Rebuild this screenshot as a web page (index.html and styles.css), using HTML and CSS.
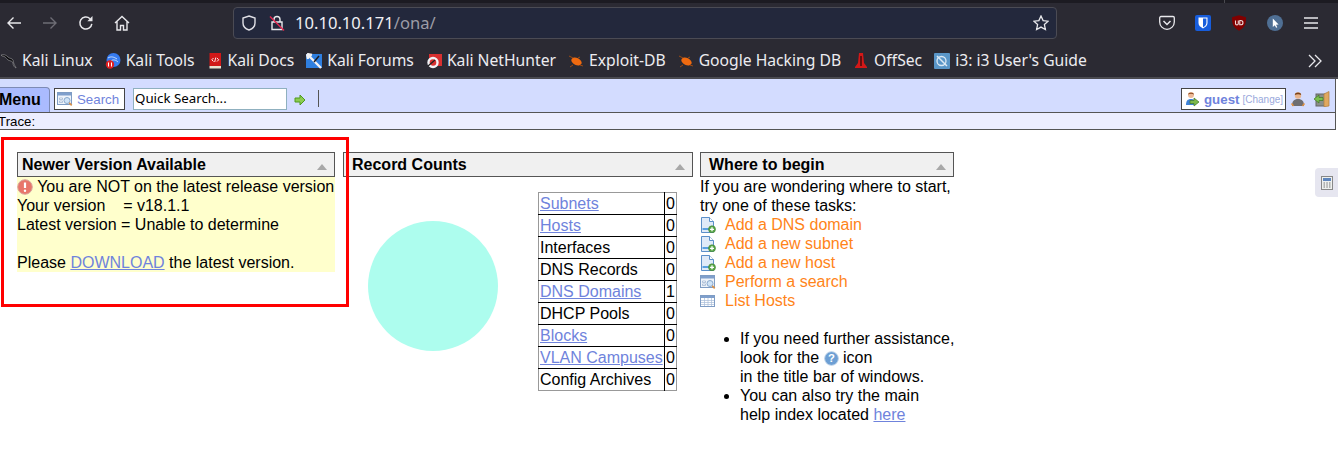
FILE: index.html
```html
<!DOCTYPE html>
<html lang="en">
<head>
<meta charset="utf-8">
<title>OpenNetAdmin</title>
<link rel="stylesheet" href="styles.css">
</head>
<body>
<svg class="defs" width="0" height="0" aria-hidden="true">
  <symbol id="doc-add" viewBox="0 0 16 16">
    <path d="M1.500 .5h8l4 4v11h-12z" fill="#dfeaf8" stroke="#5b8fc9"/>
    <path d="M9.500 .5v4h4" fill="#fff" stroke="#5b8fc9"/>
    <path d="M2.500 11h8v2h-8z" fill="#5aa0e0"/>
    <circle cx="12" cy="12.300" r="3.500" fill="#5aa84a" stroke="#3d8030" stroke-width=".6"/>
    <path d="M10 12.300h4M12 10.300v4" stroke="#fff" stroke-width="1.300"/>
  </symbol>
  <symbol id="search-win" viewBox="0 0 16 16">
    <rect x=".5" y="1.500" width="14" height="12" fill="#eef3fa" stroke="#7e9cc4"/>
    <rect x="1" y="2" width="13" height="2.500" fill="#7f9fcc"/>
    <path d="M2.500 7h3v1.500h-3zM2.500 10h3v1.500h-3z" fill="#fff" stroke="#8aa5c8" stroke-width=".6"/>
    <circle cx="10" cy="9.500" r="3" fill="#cfe3f7" stroke="#89a9cc"/>
    <path d="M12.200 11.800l2.500 2.500" stroke="#d9914a" stroke-width="1.700"/>
  </symbol>
</svg>

<header class="browser">
  <div class="top-strip"><span class="strip-mark"></span></div>
  <div class="nav-bar">
    <div class="nav-buttons">
      <svg class="icon16" viewBox="0 0 16 16"><path d="M15 8H2M7.500 2.500L2 8l5.500 5.500" fill="none" stroke="#e8e8ec" stroke-width="1.400"/></svg>
      <svg class="icon16" viewBox="0 0 16 16"><path d="M1 8h13M8.500 2.500L14 8l-5.500 5.500" fill="none" stroke="#6e6d75" stroke-width="1.400"/></svg>
      <svg class="icon16" viewBox="0 0 16 16"><path d="M13.800 8.800A6 6 0 1 1 12 3.700" fill="none" stroke="#e8e8ec" stroke-width="1.500"/><path d="M14.500 1v5.200H9.300z" fill="#e8e8ec"/></svg>
      <svg class="icon16" viewBox="0 0 16 16"><path d="M1 8l7-6.500L15 8M3 6.500V15h3.500v-4.500h3V15H13V6.500" fill="none" stroke="#e8e8ec" stroke-width="1.400"/></svg>
    </div>
    <div class="url-bar">
      <svg class="shield" viewBox="0 0 16 16"><path d="M8 1l6 2v5c0 3.500-3 6-6 7-3-1-6-3.500-6-7V3z" fill="none" stroke="#e0e0e6" stroke-width="1.400"/></svg>
      <svg class="lock" viewBox="0 0 16 16"><path d="M5 7V4.500a3 3 0 0 1 6 0V7M3 7h10v7.500H3z" fill="none" stroke="#e8e8ec" stroke-width="1.400"/><path d="M1 1.500l14 14" stroke="#e22850" stroke-width="1.400"/></svg>
      <span class="url"><span class="url-host">10.10.10.171</span>/ona/</span>
      <svg class="star" viewBox="0 0 16 16"><path d="M8 1l2.100 4.600 5 .6-3.700 3.400 1 5L8 12.100 3.600 14.600l1-5L.9 6.200l5-.6z" fill="none" stroke="#e8e8ec" stroke-width="1.300"/></svg>
    </div>
    <div class="extensions">
      <svg class="icon16" viewBox="0 0 16 16"><path d="M2 1.500h12a1.300 1.300 0 0 1 1.300 1.300V7A7.300 7.300 0 0 1 .7 7V2.800A1.300 1.300 0 0 1 2 1.500z" fill="none" stroke="#e8e8ec" stroke-width="1.300"/><path d="M4.500 6L8 9.500 11.500 6" fill="none" stroke="#e8e8ec" stroke-width="1.500"/></svg>
      <svg class="icon16" viewBox="0 0 16 16"><rect width="16" height="16" rx="2" fill="#175ddc"/><path d="M3.500 2.500h9V8c0 2.500-2 4-4.500 5.500C5.500 12 3.500 10.500 3.500 8z" fill="#fff"/><path d="M8 3.500h3.400V8c0 2-1.500 3.100-3.400 4.300z" fill="#175ddc"/></svg>
      <svg class="icon16" viewBox="0 0 16 16"><path d="M8 .3l7 2c.3 6.500-1.500 10.700-7 13.400C2.500 13 .7 8.800 1 2.300z" fill="#800000"/><path d="M4.500 5.500v3a1.400 1.400 0 0 0 2.800 0v-3M8.800 5.500v4.300h1a2.100 2.100 0 0 0 0-4.300z" fill="none" stroke="#f0d8d8" stroke-width="1.100"/></svg>
      <svg class="icon16" viewBox="0 0 16 16"><circle cx="8" cy="8" r="8" fill="#4f6f94"/><path d="M5.800 3.500v8.500l2-1.800 1.300 2.600 1.200-.6-1.300-2.500 2.600-.2z" fill="#fff"/></svg>
      <svg class="icon16" viewBox="0 0 16 16"><path d="M1 3h14M1 8h14M1 13h14" stroke="#e8e8ec" stroke-width="1.400"/></svg>
    </div>
  </div>
  <nav class="bookmarks">
    <a class="bm">
      <svg class="icon16" viewBox="0 0 16 16"><path d="M0 2c3-1 5 0 7 2 2 2 4 1 5 3 1 2 0 3 2 6 1 1 1 2 1 2-2-1-3-3-3-5 0-2-3-2-5-3C5 5 4 3 1 3z" fill="#0a0a0c" stroke="#b8b8bc" stroke-width=".5"/></svg>
      Kali Linux</a>
    <a class="bm">
      <svg class="icon16" viewBox="0 0 16 16"><circle cx="8.500" cy="7" r="7" fill="#367bf0"/><path d="M3 5c3-2 6-1 9 1M6 8c2-2 5-1 7 1" fill="none" stroke="#d8e6fb" stroke-width=".9"/><circle cx="5" cy="11.500" r="4.200" fill="#e02020"/><path d="M3.500 9.500v4M6.500 9.500v4" stroke="#fff"/></svg>
      Kali Tools</a>
    <a class="bm">
      <svg class="icon16" viewBox="0 0 16 16"><path d="M2.500 0H14v13H2.500z" fill="#d01818"/><path d="M2.500 13H14v2.500H2.500z" fill="#e8e0d0"/><path d="M6.500 5L4.800 6.800l1.700 1.700M10 5l1.700 1.800L10 8.500M8.800 4.500L7.700 9" fill="none" stroke="#fff" stroke-width=".9"/></svg>
      Kali Docs</a>
    <a class="bm">
      <svg class="icon16" viewBox="0 0 16 16"><path d="M0 1h16v14H0z" fill="#2f7fe0"/><path d="M1 1l14 14M1 1l5 1M1 1l1 5" stroke="#f2f2f5" stroke-width="2.400"/><path d="M13 3L8 9" stroke="#1c1c22" stroke-width="1.500"/></svg>
      Kali Forums</a>
    <a class="bm">
      <svg class="icon16" viewBox="0 0 16 16"><path d="M3 1h13v12H3z" fill="#d83030"/><circle cx="7" cy="9.500" r="4.500" fill="none" stroke="#f2f2f5" stroke-width="2.400"/><path d="M2 13L9 7" stroke="#222" stroke-width="1.300"/></svg>
      Kali NetHunter</a>
    <a class="bm">
      <svg class="icon16" viewBox="0 0 16 16"><ellipse cx="8.500" cy="8.500" rx="5.500" ry="3.500" transform="rotate(25 8.500 8.500)" fill="#f06a10"/><path d="M1 3l4 2M12 12l3 1M5 12l-3 2M12 4l-2 1" stroke="#9a4a14" stroke-width="1"/></svg>
      Exploit-DB</a>
    <a class="bm">
      <svg class="icon16" viewBox="0 0 16 16"><ellipse cx="8.500" cy="8.500" rx="5.500" ry="3.500" transform="rotate(25 8.500 8.500)" fill="#f06a10"/><path d="M1 3l4 2M12 12l3 1M5 12l-3 2M12 4l-2 1" stroke="#9a4a14" stroke-width="1"/></svg>
      Google Hacking DB</a>
    <a class="bm">
      <svg class="icon16" viewBox="0 0 16 16"><path d="M6 0h4l1 10 3 4v1H2v-1l3-4z" fill="#d31818"/><path d="M8 3v10" stroke="#3a0a0a" stroke-width="1.400"/></svg>
      OffSec</a>
    <a class="bm">
      <svg class="icon16" viewBox="0 0 16 16"><rect width="16" height="16" rx="1" fill="#5a96c8"/><circle cx="7.500" cy="8" r="4.500" fill="none" stroke="#dce9f4" stroke-width="1.300"/><path d="M3 3l10 10" stroke="#dce9f4" stroke-width="1.500"/></svg>
      i3: i3 User's Guide</a>
    <svg class="bm-more" viewBox="0 0 16 16"><path d="M2 2l6 6-6 6M8 2l6 6-6 6" fill="none" stroke="#e8e8ec" stroke-width="1.300"/></svg>
  </nav>
</header>

<div class="page">
  <div class="menu-bar">
    <div class="menu-tab">Menu</div>
    <a class="search-btn"><svg class="icon16" viewBox="0 0 16 16"><use href="#search-win"/></svg>Search</a>
    <div class="quick-search">Quick Search...</div>
    <svg class="go" viewBox="0 0 12 12"><path d="M1 4h5V1l5 5-5 5V8H1z" fill="#8ccc50" stroke="#4e9a1e"/></svg>
    <span class="menu-sep"></span>
    <div class="user-area">
      <a class="guest-btn">
        <svg class="icon16" viewBox="0 0 16 16"><circle cx="7" cy="4" r="3" fill="#eebb99"/><path d="M4 3.500C4 1 10 1 10 3.500 8 2.500 6 2.500 4 3.500z" fill="#8a4a20"/><path d="M2 14c0-4 1.500-6 5-6s5 2 5 6z" fill="#3f82d8"/><path d="M6 9.500h4V7l5 4-5 4v-2.500H6z" fill="#7cb84a" stroke="#3f7a22" stroke-width=".7"/></svg>
        <span class="guest-name">guest</span><span class="guest-change">[Change]</span>
      </a>
      <svg class="icon16" viewBox="0 0 16 16"><circle cx="8" cy="4.500" r="3.200" fill="#e8b48c"/><path d="M4.800 4C5 .8 11 .8 11.200 4 9 3 7 3 4.800 4z" fill="#7a4218"/><path d="M2 15c0-5 2-7 6-7s6 2 6 7z" fill="#6e6e72"/><path d="M1.500 12.500l2 2.500M14.500 12.500l-2 2.500" stroke="#e09040" stroke-width="1.500"/></svg>
      <svg class="door" viewBox="0 0 16 16"><rect x="2" y="3" width="9" height="12" fill="#8a8f8a" stroke="#666"/><path d="M10 3l5-2.500V15l-5 .8z" fill="#e0a860" stroke="#b07c3c" stroke-width=".7"/><path d="M9 6.500H5V4L0 8l5 4V9.500h4z" fill="#7cc050" stroke="#3f7a22" stroke-width=".7"/></svg>
    </div>
  </div>
  <div class="trace-bar">Trace:</div>

  <main class="panels">
    <section class="panel panel-version">
      <h2 class="panel-title">Newer Version Available<svg class="caret" viewBox="0 0 10 6"><path d="M5 0l5 6H0z" fill="#a8a8a8"/></svg></h2>
      <div class="notice">
        <div class="notice-first"><svg class="icon16 notice-icon" viewBox="0 0 16 16"><circle cx="8" cy="8" r="7.300" fill="#e8766a" stroke="#d9a79f"/><path d="M8 3.500v5.500" stroke="#fff" stroke-width="2.200"/><circle cx="8" cy="11.800" r="1.200" fill="#fff"/></svg> You are NOT on the latest release version</div>
        <div class="pre">Your version&nbsp;&nbsp;&nbsp;&nbsp;= v18.1.1</div>
        <div>Latest version = Unable to determine</div>
        <div class="blank"></div>
        <div>Please <a class="link" href="#">DOWNLOAD</a> the latest version.</div>
      </div>
    </section>

    <section class="panel panel-counts">
      <h2 class="panel-title">Record Counts<svg class="caret" viewBox="0 0 10 6"><path d="M5 0l5 6H0z" fill="#a8a8a8"/></svg></h2>
      <div class="counts-body">
        <div class="pie"></div>
        <table class="counts">
          <tr><td><a class="link" href="#">Subnets</a></td><td>0</td></tr>
          <tr><td><a class="link" href="#">Hosts</a></td><td>0</td></tr>
          <tr><td>Interfaces</td><td>0</td></tr>
          <tr><td>DNS Records</td><td>0</td></tr>
          <tr><td><a class="link" href="#">DNS Domains</a></td><td>1</td></tr>
          <tr><td>DHCP Pools</td><td>0</td></tr>
          <tr><td><a class="link" href="#">Blocks</a></td><td>0</td></tr>
          <tr><td><a class="link" href="#">VLAN Campuses</a></td><td>0</td></tr>
          <tr><td>Config Archives</td><td>0</td></tr>
        </table>
      </div>
    </section>

    <section class="panel panel-begin">
      <h2 class="panel-title">Where to begin<svg class="caret" viewBox="0 0 10 6"><path d="M5 0l5 6H0z" fill="#a8a8a8"/></svg></h2>
      <div>If you are wondering where to start,</div>
      <div>try one of these tasks:</div>
      <div class="task"><svg class="icon16" viewBox="0 0 16 16"><use href="#doc-add"/></svg>Add a DNS domain</div>
      <div class="task"><svg class="icon16" viewBox="0 0 16 16"><use href="#doc-add"/></svg>Add a new subnet</div>
      <div class="task"><svg class="icon16" viewBox="0 0 16 16"><use href="#doc-add"/></svg>Add a new host</div>
      <div class="task"><svg class="icon16" viewBox="0 0 16 16"><use href="#search-win"/></svg>Perform a search</div>
      <div class="task"><svg class="icon16" viewBox="0 0 16 16"><rect x=".5" y="2.500" width="14" height="11" fill="#fff" stroke="#7e9cc4"/><rect x="1" y="3" width="13" height="2" fill="#7f9fcc"/><path d="M1 7.500h13M1 9.500h13M1 11.500h13M4.500 5v8M8 5v8M11.500 5v8" stroke="#a9bdd8" stroke-width=".7"/></svg>List Hosts</div>
      <ul class="help">
        <li>If you need further assistance,<br>look for the <svg class="help-icon" viewBox="0 0 16 16"><circle cx="8" cy="8" r="7.300" fill="#6d9fd4" stroke="#b8cfe6"/><text x="8" y="12" text-anchor="middle" class="help-q">?</text></svg> icon<br>in the title bar of windows.</li>
        <li>You can also try the main<br>help index located <a class="link" href="#">here</a></li>
      </ul>
    </section>
  </main>
</div>

<div class="red-box"></div>
<div class="side-tab"><svg class="calc" viewBox="0 0 12 14"><rect x=".5" y=".5" width="11" height="13" fill="#eef0ee" stroke="#888"/><rect x="2" y="2" width="8" height="3" fill="#5f86bd"/><path d="M2.500 7h1.500M5.300 7h1.500M8 7h1.500M2.500 9h1.500M5.300 9h1.500M8 9h1.500M2.500 11h1.500M5.300 11h1.500M8 11h1.500" stroke="#777"/></svg></div>
</body>
</html>
```

FILE: styles.css
```css
* { box-sizing: border-box; }
html, body { margin: 0; padding: 0; }
body {
  width: 1338px;
  height: 472px;
  overflow: hidden;
  background: #fff;
  color: #000;
  font-family: "Liberation Sans", Arial, sans-serif;
  font-size: 16px;
  line-height: 19px;
  position: relative;
}
.defs { position: absolute; }
.icon16 { width: 16px; height: 16px; flex: none; display: block; }
.notice-icon { display: inline-block; width: 16px; height: 16px; vertical-align: -3px; }

/* browser chrome */
.browser { background: #2b2a33; height: 79px; border-bottom: 2px solid #4a4a50; }
.top-strip { display: flex; height: 3px; background: #1c1b22; padding-left: 1224px; }
.strip-mark { width: 1px; background: #4a4a50; }
.nav-bar { display: flex; align-items: center; height: 41px; padding-bottom: 2px; }
.nav-buttons { display: flex; gap: 20px; padding-left: 6px; width: 233px; }
.url-bar {
  width: 824px;
  height: 32px;
  display: flex;
  align-items: center;
  background: #23283c;
  border: 1px solid #4b4b54;
  border-radius: 4px;
  color: #9c9ca6;
  font-family: "Noto Sans", sans-serif;
  font-size: 16.6px;
}
.shield { width: 16px; height: 16px; margin-left: 7px; }
.lock { width: 16px; height: 16px; margin-left: 12px; }
.url { margin-left: 10px; flex: 1; }
.url-host { color: #f0f0f4; }
.star { width: 16px; height: 16px; margin-right: 7px; }
.extensions { display: flex; gap: 20px; margin-left: 102px; }
.bookmarks {
  display: flex;
  align-items: center;
  height: 33px;
  padding-left: 1px;
  gap: 12px;
  color: #ececf0;
  font-family: "Noto Sans", sans-serif;
  font-size: 15.7px;
}
.bm { display: flex; align-items: center; gap: 5px; white-space: nowrap; }
.bm-more { width: 16px; height: 16px; margin-left: auto; margin-right: 15px; }

/* page */
.menu-bar {
  height: 34px;
  width: 1336px;
  display: flex;
  align-items: flex-start;
  background: #d3dcff;
  border-right: 1px solid #555;
  border-bottom: 1px solid #555;
}
.menu-tab {
  width: 50px;
  height: 25px;
  margin-top: 8px;
  background: #aabbff;
  border: 1px solid #7d8bb5;
  border-left: 0;
  border-bottom: 0;
  border-radius: 0 4px 0 0;
  font-weight: bold;
  line-height: 24px;
  font-size: 16px;
  text-indent: -1px;
}
.search-btn {
  display: flex;
  align-items: center;
  gap: 4px;
  width: 71px;
  height: 22px;
  margin: 9px 0 0 4px;
  padding-left: 2px;
  background: #fff;
  border: 1px solid #444;
  color: #6f83dc;
  font-size: 13.3px;
}
.quick-search {
  width: 154px;
  height: 22px;
  margin: 9px 0 0 8px;
  padding-left: 1px;
  background: #fff;
  border: 1px solid #8fb0bf;
  font-family: "Noto Sans", sans-serif;
  font-size: 13.3px;
  line-height: 19px;
}
.go { width: 12px; height: 12px; margin: 15px 0 0 7px; }
.menu-sep { width: 1px; height: 17px; margin: 11px 0 0 12px; background: #555; }
.user-area { margin-left: auto; display: flex; align-items: center; gap: 4px; padding: 9px 5px 0 0; }
.guest-btn {
  display: flex;
  align-items: center;
  width: 105px;
  height: 22px;
  padding-left: 2px;
  background: #fff;
  border: 1px solid #444;
  white-space: nowrap;
}
.guest-btn .icon16 { margin-right: 4px; }
.guest-name { color: #6f83dc; font-weight: bold; font-size: 13.3px; }
.guest-change { color: #9aa9dc; font-size: 10px; margin-left: 3px; }
.door { width: 16px; height: 16px; margin-left: 4px; }
.trace-bar {
  width: 1336px;
  height: 17px;
  background: #eceeff;
  border-right: 1px solid #555;
  border-bottom: 1px solid #555;
  font-size: 13.3px;
  line-height: 18px;
  text-indent: -2px;
}

.panels { display: flex; padding: 22px 0 0 17px; }
.panel-version { width: 318px; }
.panel-counts { width: 350px; margin-left: 8px; }
.panel-begin { width: 254px; margin-left: 7px; }
.panel-title {
  margin: 0;
  height: 25px;
  display: flex;
  align-items: center;
  justify-content: space-between;
  padding: 0 7px 0 4px;
  background: #f0f0f0;
  border: 1px solid #555;
  font-size: 16px;
  font-weight: bold;
  line-height: 23px;
  color: #000;
}
.panel-counts .panel-title { padding-left: 8px; }
.panel-begin .panel-title { padding-left: 8px; }
.caret { width: 10px; height: 6px; margin-top: 4px; }
.notice { background: #ffffcc; height: 95px; }
.notice-first { white-space: nowrap; }
.blank { height: 19px; }
.link { color: #6f83dc; text-decoration: underline; }
.counts-body { display: flex; align-items: flex-start; }
.pie { width: 130px; height: 130px; margin: 44px 0 0 25px; border-radius: 50%; background: #adfdee; }
.counts {
  margin: 15px 0 0 40px;
  width: 139px;
  border-collapse: collapse;
  border: 1px solid #999;
}
.counts td { height: 22px; padding: 0 1px; border-top: 1px solid #000; line-height: 20px; white-space: nowrap; }
.counts tr:first-child td { border-top: 0; }
.counts td:first-child { padding-left: 1px; width: 126px; border-right: 1px solid #000; }
.task { display: flex; align-items: center; gap: 9px; color: #ff8419; }
.help { margin: 19px 0 0; padding: 0 0 0 40px; white-space: nowrap; }
.help-icon { width: 15px; height: 15px; vertical-align: -3px; }
.help-q { font: bold 12px "Liberation Sans", sans-serif; fill: #fff; }

/* annotation and floating tab */
.red-box {
  position: absolute;
  left: 1px;
  top: 137px;
  width: 348px;
  height: 170px;
  border: 3px solid #ff0000;
}
.side-tab {
  position: absolute;
  right: 0;
  top: 168px;
  width: 23px;
  height: 29px;
  display: flex;
  align-items: center;
  justify-content: center;
  background: #e6e6f0;
  border-radius: 4px 0 0 4px;
}
.calc { width: 12px; height: 14px; }
```
